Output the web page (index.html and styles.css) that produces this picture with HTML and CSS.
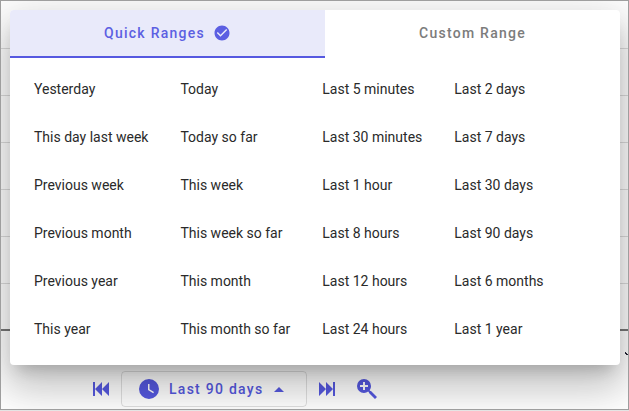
FILE: index.html
```html
<!DOCTYPE html>
<html lang="en">
<head>
<meta charset="utf-8">
<title>Time range</title>
<link rel="stylesheet" href="styles.css">
</head>
<body>
<main class="panel">
  <div class="chart">
    <div class="chart-row"></div>
    <div class="chart-row"></div>
    <div class="chart-row"></div>
    <div class="chart-row"></div>
    <div class="chart-row"></div>
    <div class="chart-row"></div>
    <div class="chart-row chart-axis"></div>
    <svg class="chart-mark" viewBox="0 0 3 4" aria-hidden="true"><path d="M0 0h1v1h1v1h1v1H1V2H0z"/></svg>
  </div>

  <div class="toolbar">
    <button class="icon-button" type="button" aria-label="Previous range">
      <svg class="icon" viewBox="0 0 24 24"><path d="M20,5V19L13,12M6,5V19H4V5M13,5V19L6,12"/></svg>
    </button>
    <button class="range-button" type="button" aria-expanded="true">
      <svg class="icon" viewBox="0 0 24 24"><path d="M12,2A10,10 0 0,0 2,12A10,10 0 0,0 12,22A10,10 0 0,0 22,12A10,10 0 0,0 12,2M16.2,16.2L11,13V7H12.5V12.2L17,14.9L16.2,16.2Z"/></svg>
      <span class="range-label">Last 90 days</span>
      <svg class="icon" viewBox="0 0 24 24"><path d="M7,15L12,10L17,15H7Z"/></svg>
    </button>
    <button class="icon-button" type="button" aria-label="Next range">
      <svg class="icon" viewBox="0 0 24 24"><path d="M4,5V19L11,12M18,5V19H20V5M11,5V19L18,12"/></svg>
    </button>
    <button class="icon-button zoom-button" type="button" aria-label="Zoom in">
      <svg class="icon" viewBox="0 0 24 24"><path d="M9,2A7,7 0 0,1 16,9C16,10.57 15.5,12 14.61,13.19L15.41,14H16L22,20L20,22L14,16V15.41L13.19,14.61C12,15.5 10.57,16 9,16A7,7 0 0,1 2,9A7,7 0 0,1 9,2M8,5V8H5V10H8V13H10V10H13V8H10V5H8Z"/></svg>
    </button>
  </div>

  <section class="menu">
    <div class="tabs" role="tablist">
      <button class="tab tab-active" type="button" role="tab" aria-selected="true">
        <span>Quick Ranges</span>
        <svg class="icon-small" viewBox="0 0 24 24"><path d="M12 2C6.5 2 2 6.5 2 12S6.5 22 12 22 22 17.5 22 12 17.5 2 12 2M10 17L5 12L6.41 10.59L10 14.17L17.59 6.58L19 8L10 17Z"/></svg>
      </button>
      <button class="tab" type="button" role="tab" aria-selected="false"><span>Custom Range</span></button>
    </div>
    <div class="ranges">
      <button class="range" type="button">Yesterday</button>
      <button class="range" type="button">This day last week</button>
      <button class="range" type="button">Previous week</button>
      <button class="range" type="button">Previous month</button>
      <button class="range" type="button">Previous year</button>
      <button class="range" type="button">This year</button>
      <button class="range" type="button">Today</button>
      <button class="range" type="button">Today so far</button>
      <button class="range" type="button">This week</button>
      <button class="range" type="button">This week so far</button>
      <button class="range" type="button">This month</button>
      <button class="range" type="button">This month so far</button>
      <button class="range" type="button">Last 5 minutes</button>
      <button class="range" type="button">Last 30 minutes</button>
      <button class="range" type="button">Last 1 hour</button>
      <button class="range" type="button">Last 8 hours</button>
      <button class="range" type="button">Last 12 hours</button>
      <button class="range" type="button">Last 24 hours</button>
      <button class="range" type="button">Last 2 days</button>
      <button class="range" type="button">Last 7 days</button>
      <button class="range" type="button">Last 30 days</button>
      <button class="range" type="button">Last 90 days</button>
      <button class="range" type="button">Last 6 months</button>
      <button class="range" type="button">Last 1 year</button>
    </div>
  </section>
</main>
</body>
</html>
```
FILE: styles.css
```css
* {
  box-sizing: border-box;
}

body {
  margin: 0;
  padding-bottom: 1px;
  background: #e4e4e4;
  font-family: Roboto, "Liberation Sans", sans-serif;
  font-size: 14px;
  line-height: 20px;
}

button {
  margin: 0;
  padding: 0;
  border: 0;
  background: none;
  font: inherit;
  color: inherit;
  cursor: pointer;
}

.panel {
  position: relative;
  display: flex;
  flex-direction: column;
  min-height: calc(100vh - 1px);
  overflow: hidden;
  border: 1px solid #9e9e9e;
  background: #fff;
}

.chart {
  position: relative;
  flex: 1;
}

.chart-row {
  height: 47px;
  border-bottom: 1px solid #dcdcdc;
}

.chart-row:first-child {
  height: 48px;
}

.chart-axis {
  height: 47px;
  border-bottom: 2px solid #777;
}

.chart-mark {
  position: absolute;
  right: 0;
  bottom: 15px;
  width: 3px;
  height: 4px;
  fill: #223;
}

.toolbar {
  display: flex;
  align-items: center;
  gap: 8px;
  padding: 0 88px 2px;
  color: #5659e0;
}

.icon,
.icon-small {
  display: block;
  flex: none;
  fill: currentColor;
}

.icon {
  width: 24px;
  height: 24px;
}

.icon-small {
  width: 18px;
  height: 18px;
}

.zoom-button {
  margin-left: 8px;
}

.range-button {
  display: flex;
  align-items: center;
  height: 36px;
  padding: 0 15px;
  border: 1px solid rgba(0, 0, 0, 0.12);
  border-radius: 4px;
}

.range-label {
  padding: 0 4px 0 8px;
  font-weight: 500;
  letter-spacing: 0.09em;
}

.menu {
  position: absolute;
  top: 9px;
  left: 9px;
  right: 8px;
  overflow: hidden;
  border-radius: 4px;
  background: #fff;
  box-shadow:
    0 11px 15px -7px rgba(0, 0, 0, 0.2),
    0 24px 38px 3px rgba(0, 0, 0, 0.14),
    0 9px 46px 8px rgba(0, 0, 0, 0.12);
}

.tabs {
  display: flex;
}

.tab {
  display: flex;
  flex: 1 1 auto;
  align-items: center;
  justify-content: center;
  gap: 8px;
  height: 48px;
  border-bottom: 2px solid transparent;
  font-weight: 500;
  letter-spacing: 0.09em;
  color: #7c7c7c;
}

.tab-active {
  border-color: #5659e0;
  background: #e9eafa;
  color: #5c5fe2;
}

.ranges {
  display: grid;
  grid-template-rows: repeat(6, 48px);
  grid-auto-flow: column;
  grid-auto-columns: max-content;
  padding: 7px 8px 12px;
}

.range {
  padding: 0 16px;
  text-align: left;
  white-space: nowrap;
  color: #2a2a2a;
}
```
